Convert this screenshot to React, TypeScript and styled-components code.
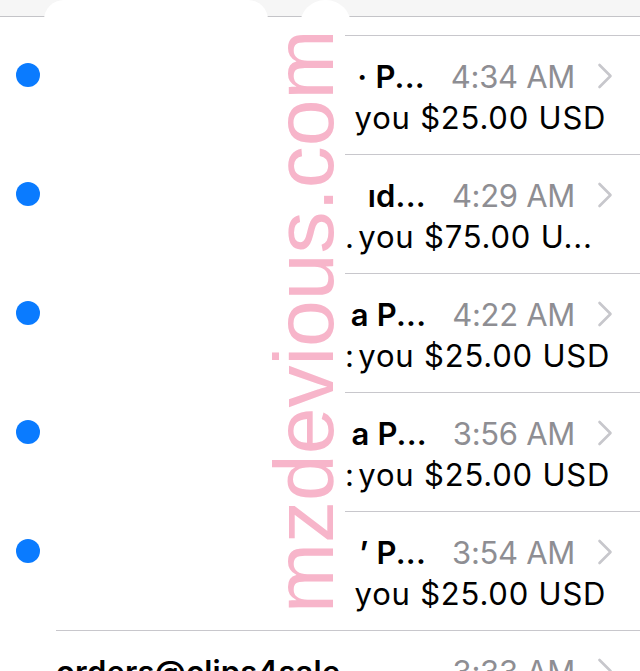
import React from "react";
import styled, { createGlobalStyle } from "styled-components";

const Global = createGlobalStyle`
  html, body {
    margin: 0;
    padding: 0;
    background: #ffffff;
    overflow: hidden;
  }
  body {
    font-family: Inter, "Liberation Sans", Arial, sans-serif;
    -webkit-font-smoothing: antialiased;
  }
`;

const Page = styled.div`
  position: relative;
  width: 640px;
  height: 671px;
  overflow: hidden;
  background: #ffffff;
`;

const TopBar = styled.div`
  height: 16px;
  background: #f6f6f6;
  border-bottom: 1px solid #c4c4c8;
`;

const Gap = styled.div`
  height: 18px;
`;

const Redaction = styled.div<{ $left: number; $width: number; $radius: number }>`
  position: absolute;
  top: 0;
  left: ${(p) => p.$left}px;
  width: ${(p) => p.$width}px;
  height: 34px;
  background: #ffffff;
  border-radius: ${(p) => p.$radius}px ${(p) => p.$radius}px 0 0;
`;

const List = styled.div`
  display: flex;
  flex-direction: column;
`;

const Row = styled.div`
  display: flex;
  align-items: flex-start;
  height: 119px;
  flex-shrink: 0;
`;

const DotCell = styled.div`
  width: 56px;
  flex-shrink: 0;
  display: flex;
  justify-content: center;
  padding-top: 28px;
`;

const Dot = styled.div`
  width: 24px;
  height: 24px;
  border-radius: 50%;
  background: #0a7bff;
`;

const Body = styled.div<{ $offset: number }>`
  flex: 1;
  min-width: 0;
  margin-left: ${(p) => p.$offset}px;
  border-top: 1px solid #c8c7cc;
  padding-top: 19px;
  height: 118px;
  box-sizing: border-box;
`;

const TitleLine = styled.div`
  display: flex;
  align-items: center;
  height: 42px;
`;

const Title = styled.div<{ $align: "left" | "right" }>`
  flex: 1;
  min-width: 0;
  font-size: 31px;
  font-weight: 600;
  color: #000000;
  white-space: nowrap;
  overflow: hidden;
  text-align: ${(p) => p.$align};
  padding-right: 26px;
  letter-spacing: 0.2px;
`;

const Time = styled.div`
  font-size: 31px;
  font-weight: 400;
  color: #8e8e93;
  white-space: nowrap;
  letter-spacing: -0.3px;
`;

const ChevronBox = styled.div`
  width: 16px;
  height: 26px;
  margin-left: 22px;
  margin-right: 27px;
  display: flex;
`;

const Preview = styled.div`
  height: 42px;
  line-height: 42px;
  font-size: 31px;
  font-weight: 400;
  color: #000000;
  white-space: nowrap;
  overflow: hidden;
  letter-spacing: 0.8px;
`;

const Watermark = styled.div`
  position: absolute;
  left: 262px;
  top: 613px;
  transform-origin: 0 0;
  transform: rotate(-90deg);
  font-family: "Liberation Sans", Arial, sans-serif;
  font-size: 84px;
  line-height: 1;
  color: #f7b5ca;
  white-space: nowrap;
  pointer-events: none;
`;

const Chevron = () => (
  <ChevronBox>
    <svg width="16" height="26" viewBox="0 0 16 26">
      <polyline
        points="2.5,2 13.5,13 2.5,24"
        fill="none"
        stroke="#c7c7cc"
        strokeWidth="2.6"
        strokeLinecap="round"
        strokeLinejoin="round"
      />
    </svg>
  </ChevronBox>
);

type Mail = {
  title: string;
  time: string;
  preview: string;
  unread: boolean;
  redacted: boolean;
};

const mails: Mail[] = [
  { title: "· P...", time: "4:34 AM", preview: "\u00a0you $25.00 USD", unread: true, redacted: true },
  { title: "ıd...", time: "4:29 AM", preview: ".\u200ayou $75.00 U...", unread: true, redacted: true },
  { title: "a P...", time: "4:22 AM", preview: ":\u200ayou $25.00 USD", unread: true, redacted: true },
  { title: "a P...", time: "3:56 AM", preview: ":\u200ayou $25.00 USD", unread: true, redacted: true },
  { title: "\u02bc P...", time: "3:54 AM", preview: "\u00a0you $25.00 USD", unread: true, redacted: true },
  { title: "orders@clips4sale", time: "3:33 AM", preview: "", unread: false, redacted: false },
];

export default function App() {
  return (
    <Page>
      <Global />
      <TopBar />
      <Gap />
      <List>
        {mails.map((m, i) => (
          <Row key={i}>
            <DotCell>{m.unread && <Dot />}</DotCell>
            <Body $offset={m.redacted ? 289 : 0}>
              <TitleLine>
                <Title $align={m.redacted ? "right" : "left"}>{m.title}</Title>
                <Time>{m.time}</Time>
                <Chevron />
              </TitleLine>
              <Preview>{m.preview}</Preview>
            </Body>
          </Row>
        ))}
      </List>
      <Redaction $left={44} $width={224} $radius={20} />
      <Redaction $left={300} $width={51} $radius={25} />
      <Watermark>mzdevious.com</Watermark>
    </Page>
  );
}
